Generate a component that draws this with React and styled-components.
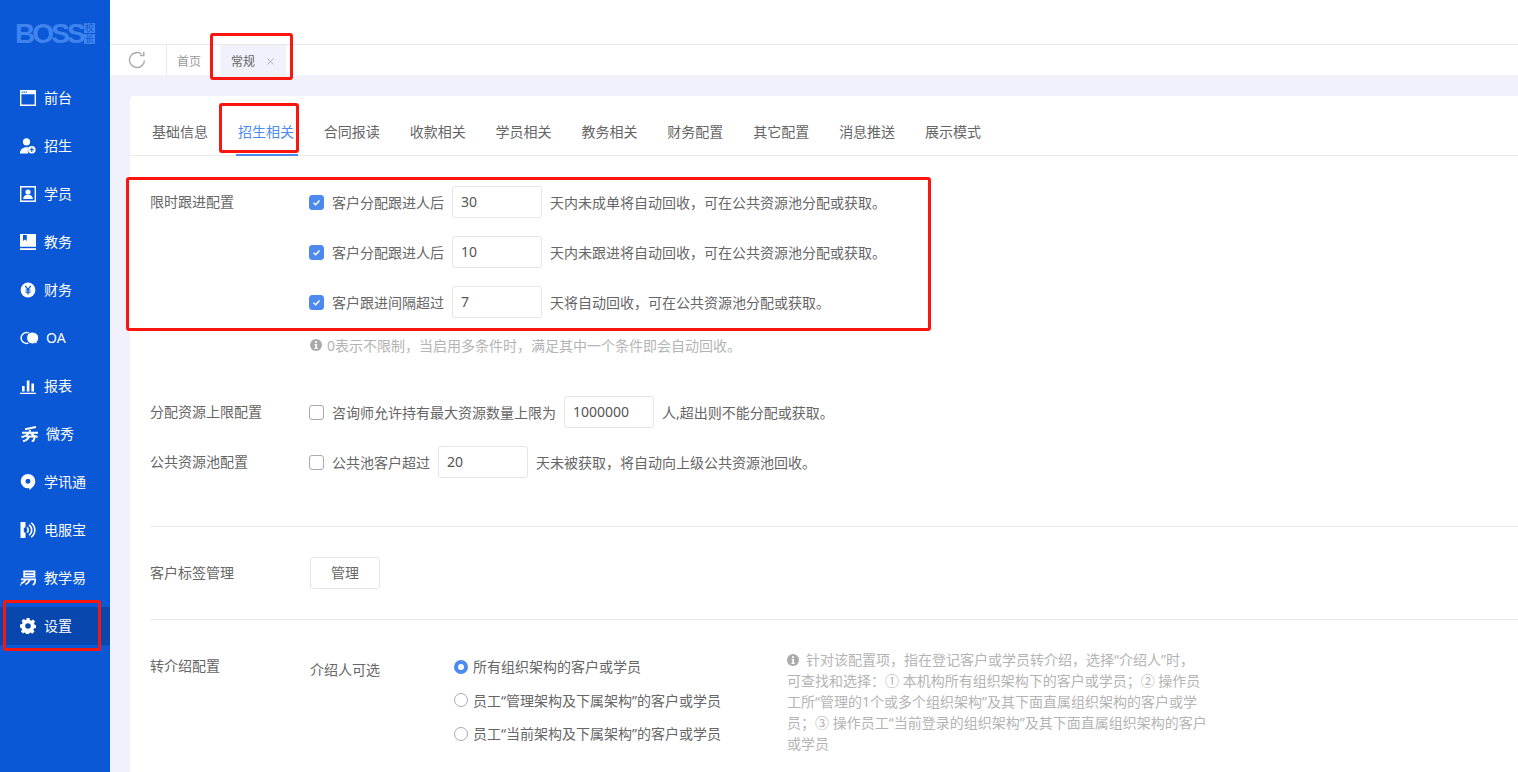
import React from 'react'
import styled, { createGlobalStyle } from 'styled-components'
import { X } from 'lucide-react'

const GlobalStyle = createGlobalStyle`
  html, body {
    margin: 0;
    padding: 0;
    overflow: hidden;
    background: #fff;
  }
  * { box-sizing: border-box; }
  body {
    font-family: "Noto Sans", "Noto Sans CJK SC", sans-serif;
    color: #666;
  }
`

const Page = styled.div`
  position: relative;
  display: flex;
  width: 1518px;
  height: 772px;
  overflow: hidden;
`

const Sidebar = styled.aside`
  flex: 0 0 110px;
  background: #0a58d6;
  color: #fff;
`

const Logo = styled.div`
  height: 74px;
  padding: 20px 0 0 15px;
  display: flex;
  align-items: flex-start;
  color: #3f83ee;
`

const LogoWord = styled.span`
  width: 69px;
  font-family: "Liberation Sans", sans-serif;
  font-weight: 700;
  font-size: 28px;
  line-height: 27px;
  letter-spacing: -2.9px;
`

const LogoBadge = styled.span`
  display: flex;
  flex-direction: column;
  gap: 1px;
  margin-top: 3px;
  span {
    display: block;
    width: 11px;
    height: 10px;
    background: #3f83ee;
    color: #0a58d6;
    font-size: 9px;
    line-height: 10px;
    text-align: center;
  }
`

const Menu = styled.nav`
  display: flex;
  flex-direction: column;
  gap: 10px;
  padding-top: 5px;
`

const MenuItem = styled.div`
  display: flex;
  align-items: center;
  height: 38px;
  padding-left: 20px;
  font-size: 14px;
  background: ${({ $active }) => ($active ? '#0847ae' : 'transparent')};
  svg {
    flex: 0 0 auto;
    width: ${({ $wide }) => ($wide ? '19px' : '16px')};
    height: 16px;
    margin-right: ${({ $gap }) => $gap || 8}px;
  }
`

const MenuText = styled.span`
  margin-bottom: 2px;
`

const Main = styled.main`
  flex: 1;
  display: flex;
  flex-direction: column;
  min-width: 0;
  background: #f0f1fa;
`

const Header = styled.div`
  height: 45px;
  background: #fff;
  border-bottom: 1px solid #e9e9e9;
`

const TabBar = styled.div`
  display: flex;
  height: 30px;
  background: #fff;
`

const Refresh = styled.div`
  width: 57px;
  padding-right: 3px;
  display: flex;
  align-items: center;
  justify-content: center;
  border-right: 1px solid #e9e9e9;
  color: #aaa;
`

const PageTab = styled.div`
  display: flex;
  align-items: center;
  gap: 11px;
  height: 30px;
  padding: 2px 0 0 ${({ $active }) => ($active ? '11px' : '10px')};
  font-size: 12px;
  color: ${({ $active }) => ($active ? '#666' : '#999')};
  background: ${({ $active }) => ($active ? '#f0f1fa' : '#fff')};
  width: ${({ $active }) => ($active ? '66px' : '53px')};
  white-space: nowrap;
  svg { color: #999; flex: none; margin-left: -1px; }
`

const Content = styled.div`
  flex: 1;
  margin: 21px 0 0 20px;
  background: #fff;
  border-radius: 4px 0 0 0;
  overflow: hidden;
`

const SettingTabs = styled.div`
  display: flex;
  gap: 29.9px;
  height: 60px;
  padding: 20px 0 0 22px;
  border-bottom: 1px solid #e9e9e9;
`

const SettingTab = styled.div`
  position: relative;
  width: 56px;
  height: 39px;
  line-height: 32px;
  font-size: 14px;
  white-space: nowrap;
  color: ${({ $active }) => ($active ? '#4d8af0' : '#666')};
  &::after {
    content: '';
    display: ${({ $active }) => ($active ? 'block' : 'none')};
    position: absolute;
    left: -2px;
    right: -4px;
    bottom: -1px;
    height: 2px;
    background: #4d8af0;
  }
`

const Form = styled.div`
  padding: 30px 0 0 20px;
`

const Group = styled.div`
  display: flex;
  margin-top: ${({ $mt }) => $mt || 0}px;
  padding-top: ${({ $pt }) => $pt || 0}px;
  padding-bottom: ${({ $pb }) => $pb || 0}px;
  border-bottom: ${({ $line }) => ($line ? '1px solid #e9e9e9' : 'none')};
`

const Label = styled.div`
  flex: 0 0 160px;
  font-size: 14px;
  line-height: 32px;
  white-space: nowrap;
`

const Rows = styled.div`
  display: flex;
  flex-direction: column;
  gap: 18px;
`

const Row = styled.div`
  display: flex;
  align-items: center;
  height: 32px;
  font-size: 14px;
  white-space: nowrap;
`

const Check = styled.span`
  display: inline-flex;
  align-items: center;
  justify-content: center;
  width: 15px;
  height: 15px;
  margin: 0 8px 0 -1px;
  border-radius: 3px;
  background: ${({ $on }) => ($on ? '#4d8af0' : '#fff')};
  border: 1px solid ${({ $on }) => ($on ? '#4d8af0' : '#aaa')};
`

const Input = styled.div`
  width: 90px;
  height: 32px;
  margin: 0 8px;
  padding-left: 8px;
  border: 1px solid #e6e6e6;
  border-radius: 3px;
  font-size: 14px;
  line-height: 30px;
  color: #555;
`

const Hint = styled.div`
  display: flex;
  align-items: center;
  gap: 5px;
  height: 20px;
  margin-top: 17px;
  font-size: 14px;
  color: #b4b4b4;
  white-space: nowrap;
`

const ManageButton = styled.div`
  width: 70px;
  height: 32px;
  border: 1px solid #e6e6e6;
  border-radius: 3px;
  font-size: 14px;
  line-height: 30px;
  text-align: center;
`

const SubLabel = styled.div`
  flex: 0 0 143px;
  font-size: 14px;
  line-height: 20px;
  padding-top: 10px;
`

const RadioList = styled.div`
  flex: 0 0 334px;
  display: flex;
  flex-direction: column;
  gap: 13.5px;
  padding-top: 6px;
`

const RadioRow = styled.div`
  display: flex;
  align-items: center;
  height: 20px;
  font-size: 14px;
  white-space: nowrap;
  color: #666;
`

const Radio = styled.span`
  flex: none;
  width: 14px;
  height: 14px;
  margin: 1px 5px 0 1px;
  border-radius: 50%;
  background: #fff;
  border: ${({ $on }) => ($on ? '4.5px solid #4d8af0' : '1px solid #aaa')};
`

const Help = styled.div`
  margin-top: -1px;
  font-size: 14px;
  line-height: 21px;
  color: #b4b4b4;
  white-space: nowrap;
  svg { vertical-align: -1px; margin-right: 7px; }
`

const Mark = styled.div`
  position: absolute;
  left: ${({ $x }) => $x}px;
  top: ${({ $y }) => $y}px;
  width: ${({ $w }) => $w}px;
  height: ${({ $h }) => $h}px;
  border: 3px solid #f9160f;
  border-radius: 3px;
  pointer-events: none;
`

const RefreshIcon = () => (
  <svg width="18" height="18" viewBox="0 0 18 18" fill="none" stroke="currentColor" strokeWidth="1.4"><path d="M16.500 9.500A7.500 7.500 0 1 1 13.500 3" /><path d="M15.800 .8v3.700h-3.700" /></svg>
)
const CalendarIcon = () => (
  <svg viewBox="0 0 16 16"><path fill="#fff" d="M0 0h16v16H0zM1.400 4.200v10.400h13.200V4.200zM1.600 1.600v1.200h1.200V1.600zm2 0v1.200h1.200V1.600zm2 0v1.200h1.200V1.600z" fillRule="evenodd" /></svg>
)
const PersonAddIcon = () => (
  <svg viewBox="0 0 16 16"><circle cx="6.500" cy="3.800" r="3.600" fill="#fff" /><path fill="#fff" d="M0 15.600c0-4 2.600-6.400 6.500-6.400 1 0 1.800.1 2.500.4-1.200 1-1.800 3.400-.7 6z" /><circle cx="11.800" cy="11.800" r="3.800" fill="#fff" /><path stroke="#0a58d6" strokeWidth="1.100" d="M11.800 9.600v4.400M9.600 11.800H14" /></svg>
)
const StudentIcon = () => (
  <svg viewBox="0 0 16 16"><path fillRule="evenodd" fill="#fff" d="M0 0h16v16H0zM1.400 1.400v13.200h13.200V1.400z" /><circle cx="8" cy="6" r="2.600" fill="#fff" /><path fill="#fff" d="M3.200 13c0-2.800 2-4.200 4.800-4.200s4.800 1.400 4.800 4.200z" /></svg>
)
const BookIcon = () => (
  <svg viewBox="0 0 16 16"><path fillRule="evenodd" fill="#fff" d="M0 0h16v12.800H0zM3 1v6l1.900-1.400L6.800 7V1z" /><path fill="#fff" d="M0 14.200h16V16H0z" /></svg>
)
const MoneyIcon = () => (
  <svg viewBox="0 0 16 16"><circle cx="8" cy="8" r="7.400" fill="#fff" /><path stroke="#0a58d6" strokeWidth="1.200" fill="none" d="M5.200 3.800 8 7.400l2.800-3.600M8 7.400v5M5.400 8h5.200M5.400 10.200h5.200" /></svg>
)
const OaIcon = () => (
  <svg viewBox="0 0 19 16"><circle cx="6.500" cy="8" r="5.400" fill="none" stroke="#fff" strokeWidth="1.500" /><path fill="#fff" stroke="#0a58d6" strokeWidth="1.100" d="M12.500 2c3.600 0 6.300 2.500 6.300 6 0 1.900-.7 3.500-1.900 4.600l.4 1.600-2-.6c-.9.300-1.800.4-2.800.4-3.400 0-5.900-2.500-5.900-6s2.500-6 5.900-6z" /></svg>
)
const ChartIcon = () => (
  <svg viewBox="0 0 16 16"><path fill="#fff" d="M2 8h2.600v5.600H2zM6.800 2.400h2.600v11.200H6.800zM11.400 5.600H14v8h-2.600zM0 14.800h16V16H0z" /></svg>
)
const WeixiuIcon = () => (
  <svg viewBox="0 0 19 16"><path stroke="#fff" strokeWidth="2" fill="none" d="M5 3.200 16 1M2 6.800h16M10.200 1.800 9.600 7M9 7C7.400 9 4.500 10.500 1.500 11.200M11 7c1.300 2 3.400 3.300 6.500 4M6.200 10.400h8.200c0 2.600-.5 4.800-2.700 4.800M8.800 10.800C8 12.800 6 14.600 3 15.200" /></svg>
)
const PinIcon = () => (
  <svg viewBox="0 0 16 16"><path fillRule="evenodd" fill="#fff" d="M8 0a7.300 7.300 0 0 1 7.300 7.200c0 3.700-2.900 6.700-6 8.800v-1.900A7.200 7.200 0 0 1 .7 7.200 7.300 7.300 0 0 1 8 0zm0 4.700a2.500 2.500 0 1 0 0 5 2.500 2.500 0 0 0 0-5z" /></svg>
)
const PhoneIcon = () => (
  <svg viewBox="0 0 16 16"><path fill="#fff" d="M.5 0h5v5L3.800 6.300v3.400L5.500 11v5h-5z" /><path stroke="#fff" strokeWidth="1.600" fill="none" d="M7 5.400a3.300 3.300 0 0 1 0 5.200M9 2.900a6.200 6.200 0 0 1 0 10.200M11.200 .8a9 9 0 0 1 0 14.400" /></svg>
)
const TeachIcon = () => (
  <svg viewBox="0 0 17 16"><path stroke="#fff" strokeWidth="1.800" fill="none" d="M4.400 1h11v5.600h-11zM4.400 3.800h11M1 9.400h15.200c0 3.200-.4 5.600-2.800 5.600M6.400 9.600C5 11.800 3.200 13 1 13.800M10.800 9.800c-1 2.200-2.600 3.800-5 5" /><path fill="#fff" d="M0 14.600h1.400V16H0z" /></svg>
)
const GearIcon = () => (
  <svg viewBox="0 0 16 16"><path fillRule="evenodd" fill="#fff" d="M6.500 0h3l.4 2.100 1.300.6L13 1.500l2.100 2.100-1.200 1.800.6 1.300 1.500.4v3l-2.100.4-.6 1.300 1.200 1.800-2.100 2.100-1.800-1.200-1.300.6-.3 2.100h-3l-.4-2.100-1.300-.6L3 15.500.9 13.400l1.200-1.800-.6-1.300L0 9.500v-3l2.100-.4.600-1.300L1.500 3 3.600.9l1.800 1.200 1.300-.6zM8 5.200a2.800 2.800 0 1 0 0 5.600 2.800 2.800 0 0 0 0-5.600z" /></svg>
)
const InfoIcon = ({ size = 12 }) => (
  <svg width={size} height={size} viewBox="0 0 12 12"><circle cx="6" cy="6" r="6" fill="#aaa" /><path fill="#fff" d="M5 2.200h2v1.700H5zM4.500 5h2.500v3.800h.7V10H4.400V8.800h.9V6.100h-.8z" /></svg>
)
const Tick = () => (
  <svg width="11" height="11" viewBox="0 0 11 11"><path d="M2.500 5.700 4.700 7.700 8.500 3.500" stroke="#fff" strokeWidth="1.500" fill="none" /></svg>
)

const menus = [
  { name: '前台', icon: <CalendarIcon /> },
  { name: '招生', icon: <PersonAddIcon /> },
  { name: '学员', icon: <StudentIcon /> },
  { name: '教务', icon: <BookIcon /> },
  { name: '财务', icon: <MoneyIcon /> },
  { name: 'OA', icon: <OaIcon />, wide: true, gap: 7 },
  { name: '报表', icon: <ChartIcon /> },
  { name: '微秀', icon: <WeixiuIcon />, wide: true, gap: 7 },
  { name: '学讯通', icon: <PinIcon /> },
  { name: '电服宝', icon: <PhoneIcon /> },
  { name: '教学易', icon: <TeachIcon /> },
  { name: '设置', icon: <GearIcon />, active: true },
]

const tabs = ['基础信息', '招生相关', '合同报读', '收款相关', '学员相关', '教务相关', '财务配置', '其它配置', '消息推送', '展示模式']

const marks = [
  { x: 210, y: 33, w: 83, h: 47 },
  { x: 219, y: 103, w: 80, h: 50 },
  { x: 126, y: 177, w: 805, h: 154 },
  { x: 3, y: 600, w: 98, h: 51 },
]

export default function App() {
  return (
    <Page>
      <GlobalStyle />
      <Sidebar>
        <Logo>
          <LogoWord>BOSS</LogoWord>
          <LogoBadge><span>校</span><span>长</span></LogoBadge>
        </Logo>
        <Menu>
          {menus.map((item) => (
            <MenuItem key={item.name} $active={item.active} $wide={item.wide} $gap={item.gap}>
              {item.icon}
              <MenuText>{item.name}</MenuText>
            </MenuItem>
          ))}
        </Menu>
      </Sidebar>
      <Main>
        <Header />
        <TabBar>
          <Refresh><RefreshIcon /></Refresh>
          <PageTab>首页</PageTab>
          <PageTab $active>常规<X size={11} strokeWidth={1.5} /></PageTab>
        </TabBar>
        <Content>
          <SettingTabs>
            {tabs.map((name) => (
              <SettingTab key={name} $active={name === '招生相关'}>{name}</SettingTab>
            ))}
          </SettingTabs>
          <Form>
            <Group>
              <Label>限时跟进配置</Label>
              <div>
                <Rows>
                  <Row><Check $on><Tick /></Check>客户分配跟进人后<Input>30</Input>天内未成单将自动回收，可在公共资源池分配或获取。</Row>
                  <Row><Check $on><Tick /></Check>客户分配跟进人后<Input>10</Input>天内未跟进将自动回收，可在公共资源池分配或获取。</Row>
                  <Row><Check $on><Tick /></Check>客户跟进间隔超过<Input>7</Input>天将自动回收，可在公共资源池分配或获取。</Row>
                </Rows>
                <Hint><InfoIcon />0表示不限制，当启用多条件时，满足其中一个条件即会自动回收。</Hint>
              </div>
            </Group>
            <Group $mt={41}>
              <Label>分配资源上限配置</Label>
              <Row><Check />咨询师允许持有最大资源数量上限为<Input>1000000</Input>人,超出则不能分配或获取。</Row>
            </Group>
            <Group $mt={18} $line $pb={48}>
              <Label>公共资源池配置</Label>
              <Row><Check />公共池客户超过<Input>20</Input>天未被获取，将自动向上级公共资源池回收。</Row>
            </Group>
            <Group $line $pt={30} $pb={30}>
              <Label>客户标签管理</Label>
              <ManageButton>管理</ManageButton>
            </Group>
            <Group $pt={30}>
              <Label>转介绍配置</Label>
              <SubLabel>介绍人可选</SubLabel>
              <RadioList>
                <RadioRow><Radio $on />所有组织架构的客户或学员</RadioRow>
                <RadioRow><Radio />员工“管理架构及下属架构”的客户或学员</RadioRow>
                <RadioRow><Radio />员工“当前架构及下属架构”的客户或学员</RadioRow>
              </RadioList>
              <Help>
                <InfoIcon />
                针对该配置项，指在登记客户或学员转介绍，选择“介绍人”时，<br />
                可查找和选择：① 本机构所有组织架构下的客户或学员；② 操作员<br />
                工所“管理的1个或多个组织架构”及其下面直属组织架构的客户或学<br />
                员；③ 操作员工“当前登录的组织架构”及其下面直属组织架构的客户<br />
                或学员
              </Help>
            </Group>
          </Form>
        </Content>
      </Main>
      {marks.map((m) => (
        <Mark key={m.x} $x={m.x} $y={m.y} $w={m.w} $h={m.h} />
      ))}
    </Page>
  )
}
